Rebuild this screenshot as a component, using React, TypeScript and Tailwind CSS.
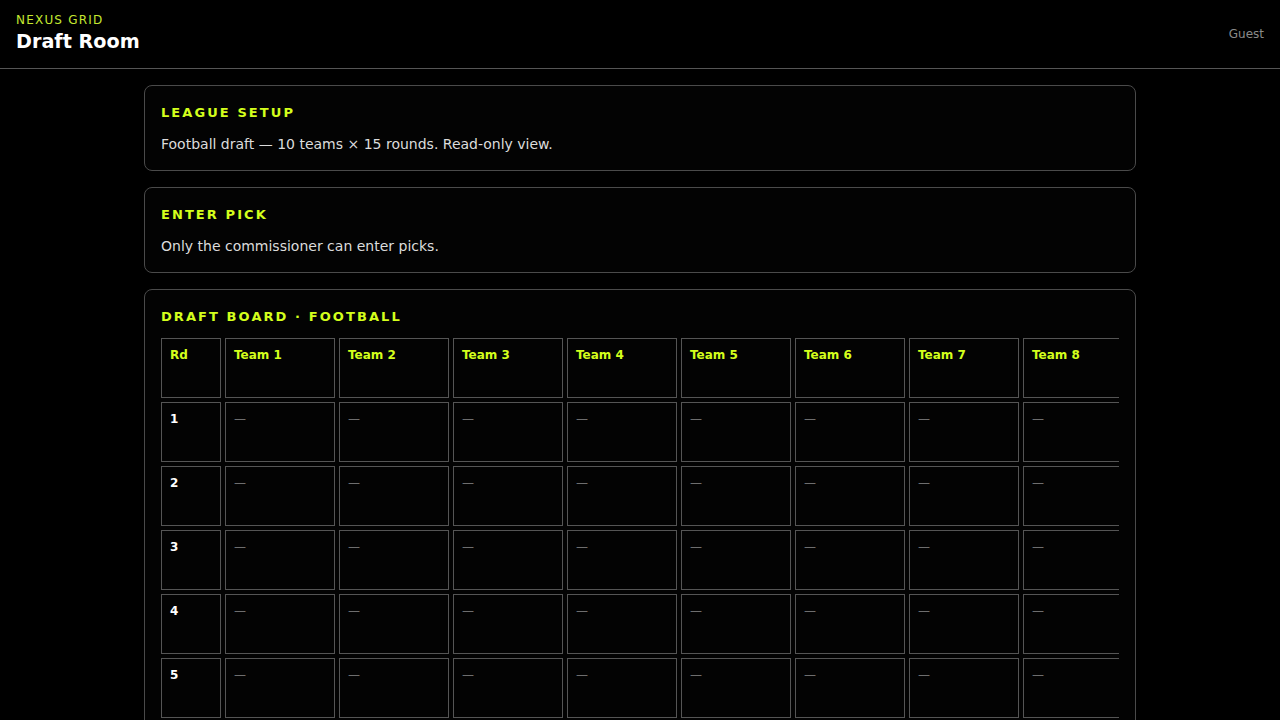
const TEAMS = Array.from({ length: 10 }, (_, i) => `Team ${i + 1}`);
const ROUNDS = Array.from({ length: 15 }, (_, i) => i + 1);

function Card({ title, children }: { title: string; children: React.ReactNode }) {
  return (
    <section className="rounded-lg border border-[#4a4a4a] bg-[#030303] p-4">
      <h2 className="mb-[10px] text-[13px] leading-[22px] font-bold tracking-[0.16em] text-[#d4ff1c]">{title}</h2>
      {children}
    </section>
  );
}

export default function App() {
  return (
    <div className="min-h-screen bg-black text-[#e5e5e5] font-['DejaVu_Sans',sans-serif]">
      <header className="flex h-[69px] items-center justify-between border-b border-[#555] px-4">
        <div>
          <div className="text-xs leading-4 tracking-[0.1em] text-[#c5e830]">NEXUS GRID</div>
          <h1 className="text-[19.2px] leading-7 font-bold text-white">Draft Room</h1>
        </div>
        <div className="text-xs text-[#8a8a8a]">Guest</div>
      </header>

      <main className="mx-auto flex max-w-[992px] flex-col gap-4 pt-4 pb-8">
        <Card title="LEAGUE SETUP">
          <p className="text-sm leading-5 text-[#dcdcdc]">Football draft — 10 teams × 15 rounds. Read-only view.</p>
        </Card>
        <Card title="ENTER PICK">
          <p className="text-sm leading-5 text-[#dcdcdc]">Only the commissioner can enter picks.</p>
        </Card>
        <Card title="DRAFT BOARD · FOOTBALL">
          <div className="overflow-x-auto">
            <div className="grid w-max grid-cols-[60px_repeat(10,110px)] gap-1 text-xs">
              <div className="h-[60px] border border-[#555] p-2 font-bold text-[#d4ff1c]">Rd</div>
              {TEAMS.map((t) => (
                <div key={t} className="h-[60px] border border-[#555] p-2 font-bold text-[#d4ff1c]">
                  {t}
                </div>
              ))}
              {ROUNDS.map((r) => [
                <div key={`r${r}`} className="h-[60px] border border-[#555] p-2 font-bold text-white">
                  {r}
                </div>,
                ...TEAMS.map((t) => (
                  <div key={`${r}-${t}`} className="h-[60px] border border-[#555] p-2 text-[#6e6e6e]">
                    —
                  </div>
                )),
              ])}
            </div>
          </div>
        </Card>
      </main>
    </div>
  );
}
